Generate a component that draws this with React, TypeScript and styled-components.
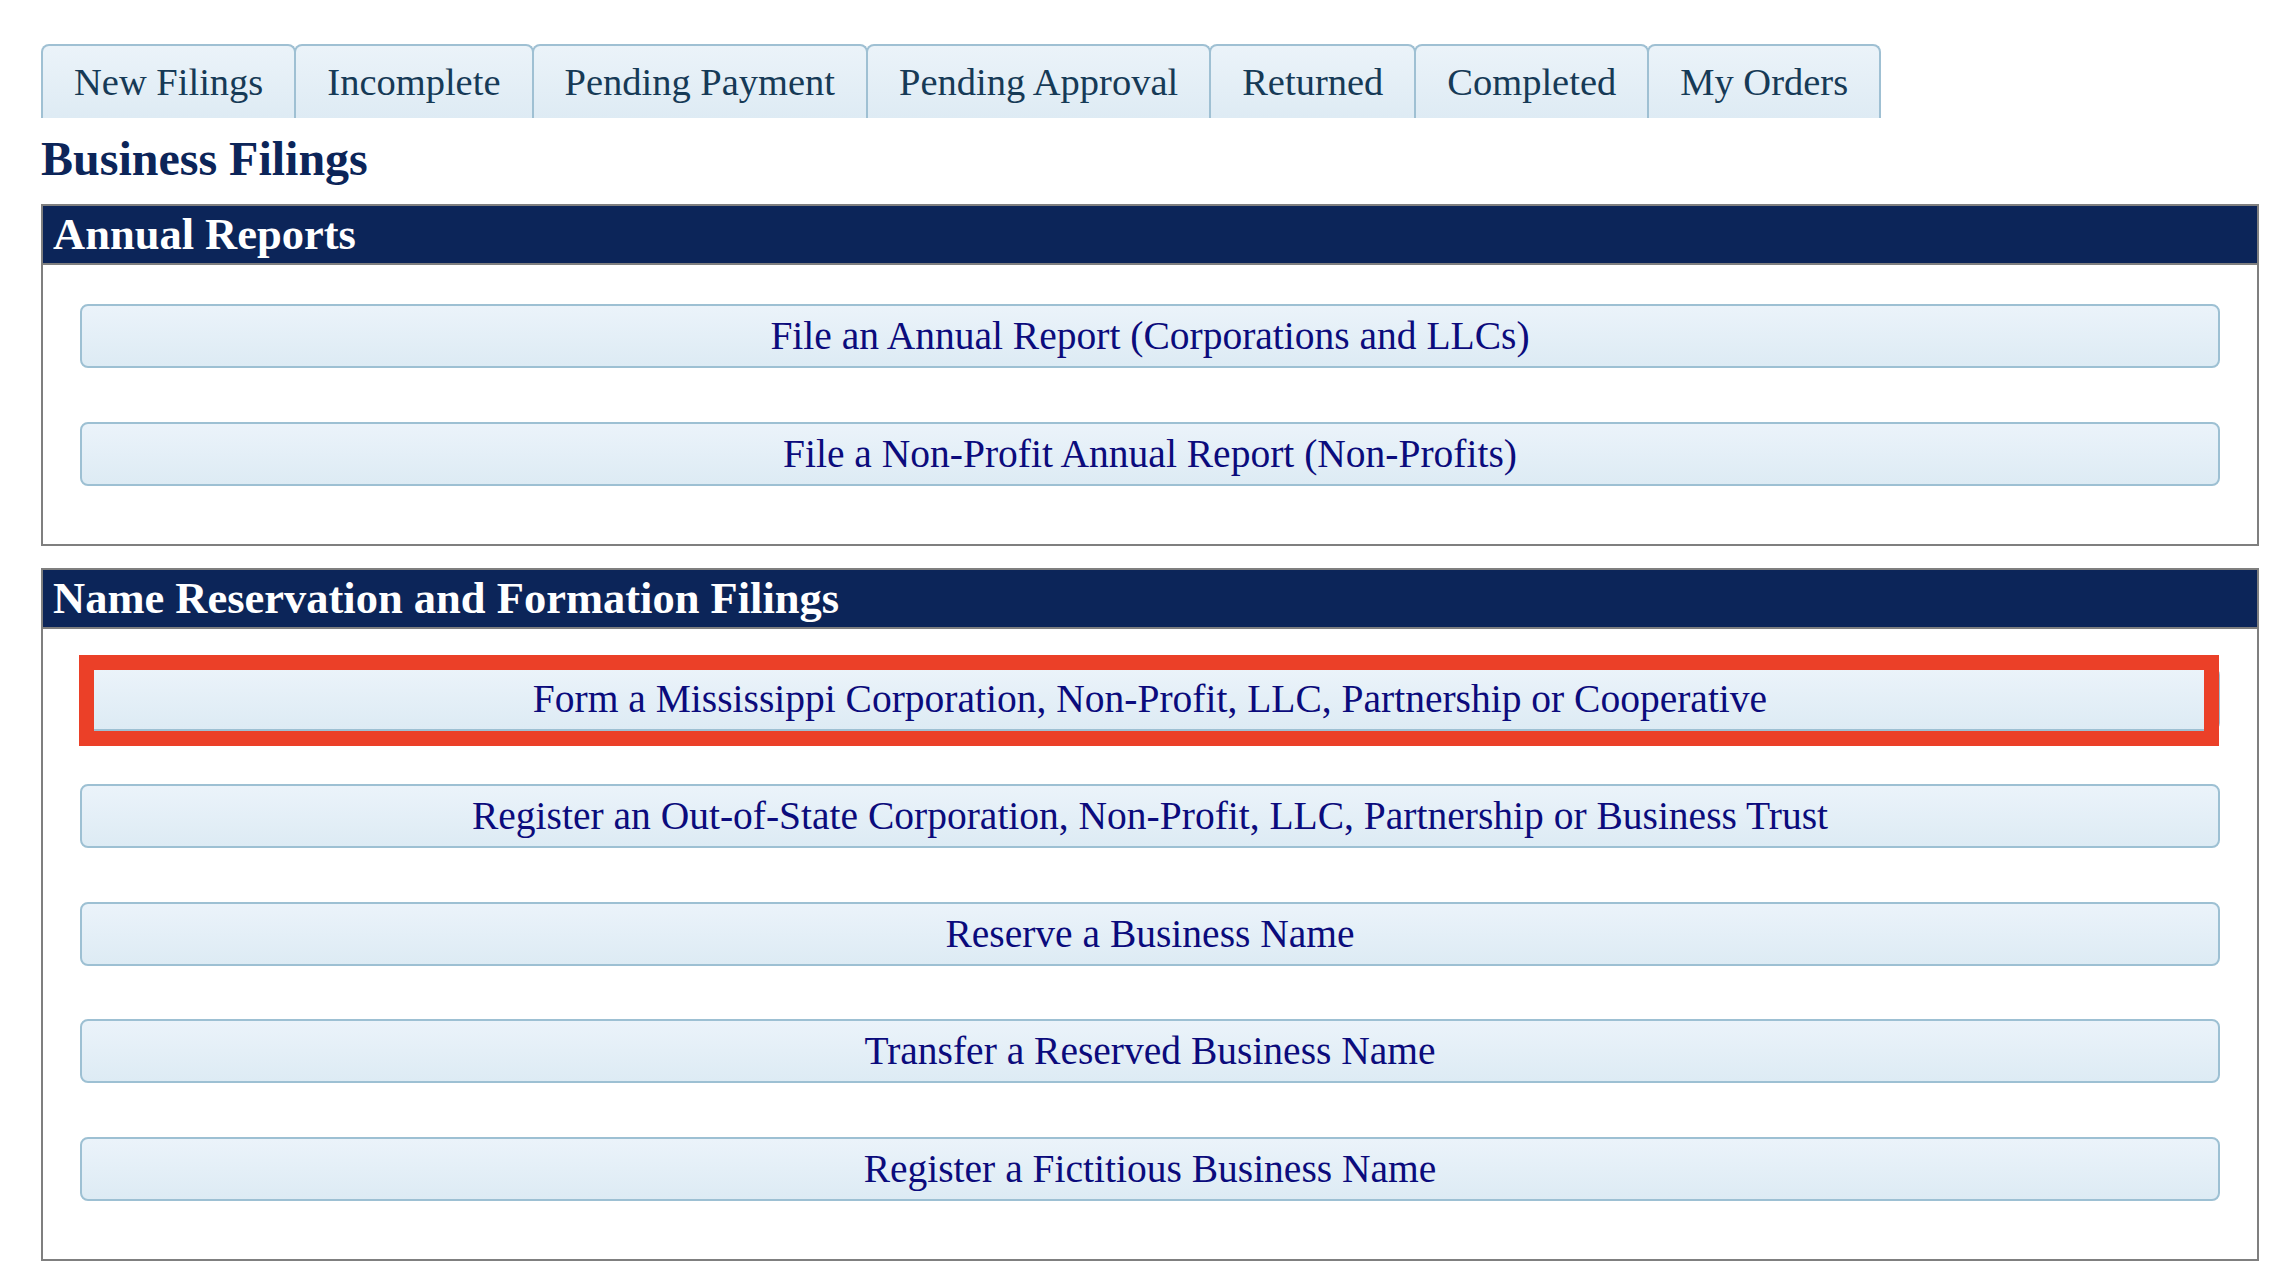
import React from 'react';
import styled, { createGlobalStyle } from 'styled-components';

const GlobalStyle = createGlobalStyle`
  html, body {
    margin: 0;
    padding: 0;
    background: #ffffff;
  }
  body {
    font-family: "Liberation Serif", "Times New Roman", serif;
  }
`;

const Page = styled.div`
  padding: 44px 27px 20px 41px;
  width: 2218px;
`;

const TabBar = styled.nav`
  display: flex;
  align-items: stretch;
  height: 74px;
`;

const Tab = styled.a`
  display: flex;
  align-items: center;
  justify-content: center;
  padding: 0 31px;
  margin-right: -2px;
  border: 2px solid #9fc0d3;
  border-bottom: none;
  border-radius: 8px 8px 0 0;
  background: linear-gradient(to bottom, #ebf3f9, #deebf4);
  color: #163a56;
  font-size: 38.5px;
  text-decoration: none;
  white-space: nowrap;
  cursor: pointer;
`;

const PageTitle = styled.h1`
  margin: 13px 0 17px;
  font-size: 48px;
  line-height: 56px;
  font-weight: 700;
  color: #0c2559;
`;

const Section = styled.section<{ $gapAfter?: number }>`
  border: 2px solid #7f7f7f;
  margin-bottom: ${({ $gapAfter }) => $gapAfter ?? 0}px;
`;

const SectionHeader = styled.h2`
  margin: 0;
  height: 57px;
  padding-left: 10px;
  background: #0c2559;
  border-bottom: 2px solid #7f7f7f;
  color: #ffffff;
  font-size: 44.5px;
  line-height: 57px;
  font-weight: 700;
`;

const SectionBody = styled.div<{ $top: number; $bottom: number }>`
  display: flex;
  flex-direction: column;
  gap: 53.5px;
  padding: ${({ $top }) => $top}px 37px ${({ $bottom }) => $bottom}px;
`;

const ButtonSlot = styled.div`
  position: relative;
`;

const FilingButton = styled.button`
  display: flex;
  align-items: center;
  justify-content: center;
  width: 100%;
  height: 64px;
  padding: 0;
  border: 2px solid #9dc0d3;
  border-radius: 8px;
  background: linear-gradient(to bottom, #ebf3fa, #ddebf4);
  color: #0b0b7c;
  font-family: "Liberation Serif", "Times New Roman", serif;
  font-size: 39.5px;
  cursor: pointer;
`;

const HighlightFrame = styled.span`
  position: absolute;
  top: -12px;
  left: -1px;
  right: 1px;
  bottom: -15px;
  border: 15px solid #eb4028;
  pointer-events: none;
`;

const tabs = [
  'New Filings',
  'Incomplete',
  'Pending Payment',
  'Pending Approval',
  'Returned',
  'Completed',
  'My Orders',
];

const annualReports = [
  'File an Annual Report (Corporations and LLCs)',
  'File a Non-Profit Annual Report (Non-Profits)',
];

const formationFilings = [
  'Form a Mississippi Corporation, Non-Profit, LLC, Partnership or Cooperative',
  'Register an Out-of-State Corporation, Non-Profit, LLC, Partnership or Business Trust',
  'Reserve a Business Name',
  'Transfer a Reserved Business Name',
  'Register a Fictitious Business Name',
];

const HIGHLIGHTED = formationFilings[0];

const App: React.FC = () => {
  return (
    <>
      <GlobalStyle />
      <Page>
        <TabBar>
          {tabs.map((t) => (
            <Tab key={t}>{t}</Tab>
          ))}
        </TabBar>

        <PageTitle>Business Filings</PageTitle>

        <Section $gapAfter={22}>
          <SectionHeader>Annual Reports</SectionHeader>
          <SectionBody $top={39} $bottom={58}>
            {annualReports.map((label) => (
              <ButtonSlot key={label}>
                <FilingButton>{label}</FilingButton>
              </ButtonSlot>
            ))}
          </SectionBody>
        </Section>

        <Section>
          <SectionHeader>Name Reservation and Formation Filings</SectionHeader>
          <SectionBody $top={38} $bottom={58}>
            {formationFilings.map((label) => (
              <ButtonSlot key={label}>
                <FilingButton>{label}</FilingButton>
                {label === HIGHLIGHTED && <HighlightFrame />}
              </ButtonSlot>
            ))}
          </SectionBody>
        </Section>
      </Page>
    </>
  );
};

export default App;
